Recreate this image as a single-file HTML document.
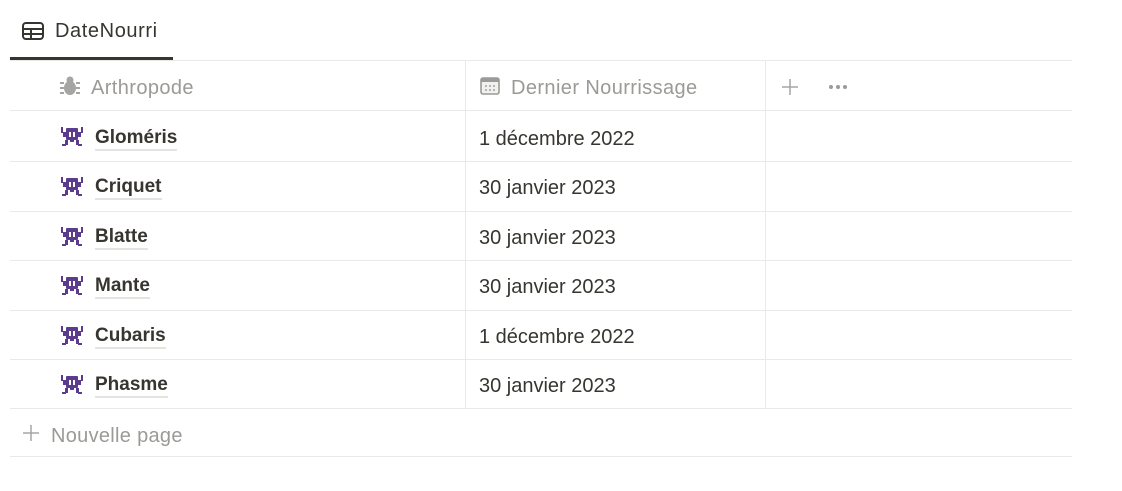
<!DOCTYPE html>
<html><head><meta charset="utf-8"><style>
body{margin:0;background:#fff;font-family:"Liberation Sans",sans-serif;color:#37352f;width:1122px;height:491px;overflow:hidden;position:relative}
.abs{position:absolute}
.hl{position:absolute;left:10px;width:1062px;height:1px;background:#e9e9e7}
.vl{position:absolute;width:1px;background:#e9e9e7;top:61px;height:347px}
.t{position:absolute;font-size:20px;white-space:nowrap}
.name{font-weight:bold;font-size:19px;border-bottom:2px solid #e3e3e1;line-height:22px}
</style></head><body>
<svg class="abs" style="left:22px;top:22px" width="22" height="18" viewBox="0 0 22 18"><rect x="1" y="1" width="20" height="16" rx="3" fill="none" stroke="#37352f" stroke-width="2"/><line x1="1" y1="7" x2="21" y2="7" stroke="#37352f" stroke-width="2"/><line x1="1" y1="12" x2="21" y2="12" stroke="#37352f" stroke-width="2"/><line x1="9" y1="7" x2="9" y2="17" stroke="#37352f" stroke-width="2"/></svg>
<div class="t" style="left:55px;top:20px;font-size:20px;letter-spacing:0.6px">DateNourri</div>
<div class="abs" style="left:10px;top:57px;width:163px;height:3px;background:#37352f"></div>
<div class="hl" style="top:60px"></div>
<div class="hl" style="top:110px"></div>
<div class="hl" style="top:161px"></div>
<div class="hl" style="top:211px"></div>
<div class="hl" style="top:260px"></div>
<div class="hl" style="top:310px"></div>
<div class="hl" style="top:359px"></div>
<div class="hl" style="top:408px"></div>
<div class="hl" style="top:456px"></div>
<div class="vl" style="left:465px"></div>
<div class="vl" style="left:765px"></div>
<svg class="abs" style="left:59px;top:75px" width="22" height="22" viewBox="0 0 22 22" fill="#a5a5a3"><ellipse cx="11" cy="13" rx="6" ry="7"/><circle cx="11" cy="5" r="3.5"/><path d="M1 8h4M1 13h4M1 18h4M17 8h4M17 13h4M17 18h4" stroke="#a5a5a3" stroke-width="2"/></svg>
<div class="t" style="left:91px;top:77px;color:#9b9a97;letter-spacing:0.4px">Arthropode</div>
<svg class="abs" style="left:480px;top:77px" width="20" height="18" viewBox="0 0 20 18"><rect x="1" y="1" width="18" height="16" rx="2" fill="#f1f1ef" stroke="#9b9a97" stroke-width="1.6"/><rect x="1" y="1" width="18" height="4" fill="#9b9a97"/><g fill="#b5b5b3"><rect x="5" y="8" width="2" height="2"/><rect x="9" y="8" width="2" height="2"/><rect x="13" y="8" width="2" height="2"/><rect x="5" y="12" width="2" height="2"/><rect x="9" y="12" width="2" height="2"/><rect x="13" y="12" width="2" height="2"/></g></svg>
<div class="t" style="left:511px;top:77px;color:#9b9a97;letter-spacing:0.4px">Dernier Nourrissage</div>
<svg class="abs" style="left:781px;top:78px" width="18" height="18"><path d="M9 1v16M1 9h16" stroke="#a5a5a3" stroke-width="1.5"/></svg>
<svg class="abs" style="left:828px;top:84px" width="20" height="6"><circle cx="3" cy="3" r="2" fill="#9b9a97"/><circle cx="10" cy="3" r="2" fill="#9b9a97"/><circle cx="17" cy="3" r="2" fill="#9b9a97"/></svg>

<svg width="0" height="0" style="position:absolute"><defs><g id="inv"><g fill="#5b3b8c"><rect x="6" y="3" width="12" height="12" rx="1"/><rect x="3" y="7" width="18" height="5"/><rect x="1" y="2" width="2" height="6"/><rect x="21" y="2" width="2" height="6"/><rect x="5" y="15" width="3" height="5"/><rect x="16" y="15" width="3" height="5"/><rect x="10" y="15" width="4" height="2"/><rect x="2" y="19" width="4" height="2"/><rect x="18" y="19" width="4" height="2"/></g><rect x="9" y="7" width="2" height="5" fill="#fff"/><rect x="13" y="7" width="2" height="5" fill="#fff"/></g></defs></svg>

<svg class="abs" style="left:60px;top:125px" width="24" height="22"><use href="#inv"/></svg>
<div class="t name" style="left:95px;top:127px">Gloméris</div>
<div class="t" style="left:479px;top:128px">1 décembre 2022</div>

<svg class="abs" style="left:60px;top:175px" width="24" height="22"><use href="#inv"/></svg>
<div class="t name" style="left:95px;top:176px">Criquet</div>
<div class="t" style="left:479px;top:177px">30 janvier 2023</div>

<svg class="abs" style="left:60px;top:225px" width="24" height="22"><use href="#inv"/></svg>
<div class="t name" style="left:95px;top:226px">Blatte</div>
<div class="t" style="left:479px;top:227px">30 janvier 2023</div>

<svg class="abs" style="left:60px;top:274px" width="24" height="22"><use href="#inv"/></svg>
<div class="t name" style="left:95px;top:275px">Mante</div>
<div class="t" style="left:479px;top:276px">30 janvier 2023</div>

<svg class="abs" style="left:60px;top:324px" width="24" height="22"><use href="#inv"/></svg>
<div class="t name" style="left:95px;top:325px">Cubaris</div>
<div class="t" style="left:479px;top:326px">1 décembre 2022</div>

<svg class="abs" style="left:60px;top:373px" width="24" height="22"><use href="#inv"/></svg>
<div class="t name" style="left:95px;top:374px">Phasme</div>
<div class="t" style="left:479px;top:375px">30 janvier 2023</div>

<svg class="abs" style="left:22px;top:424px" width="18" height="18"><path d="M9 1v16M1 9h16" stroke="#a5a5a3" stroke-width="1.5"/></svg>
<div class="t" style="left:51px;top:425px;color:#9b9a97;letter-spacing:0.3px">Nouvelle page</div>
</body></html>
